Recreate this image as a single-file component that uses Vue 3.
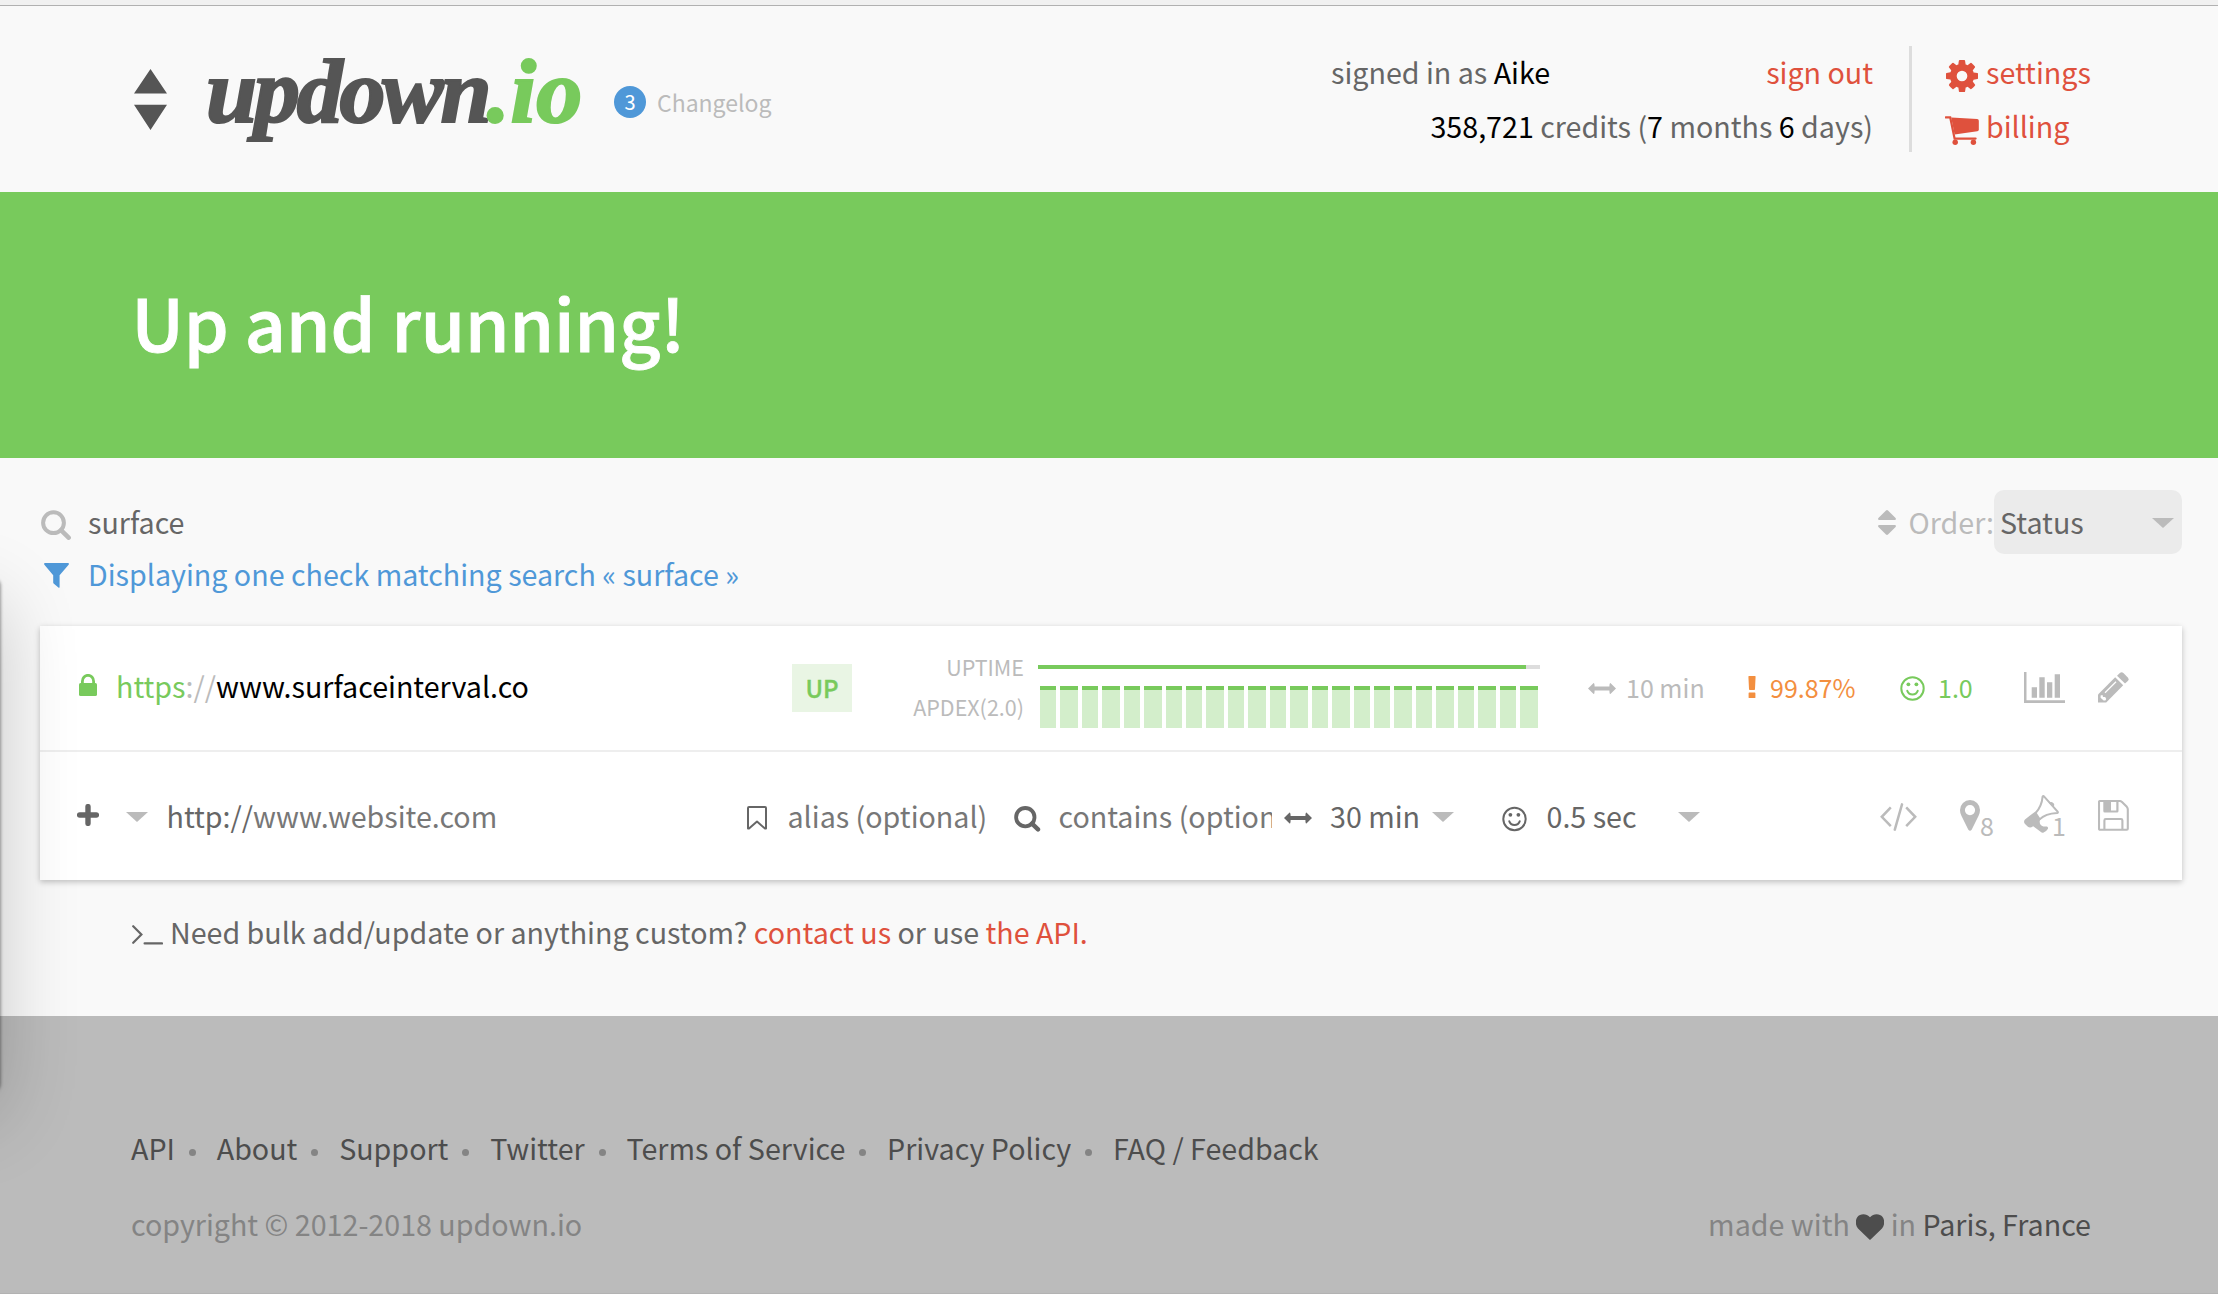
<script setup>
const footerLinks = ['API', 'About', 'Support', 'Twitter', 'Terms of Service', 'Privacy Policy', 'FAQ / Feedback']

// 24 hourly columns, snapped to even pixels with a 4px gutter
const edge = (i) => 2 * Math.round((i * 20.87) / 2)
const bars = Array.from({ length: 24 }, (_, i) => (i === 23 ? 18 : edge(i + 1) - edge(i) - 4))
</script>

<template>
  <div class="page">
    <div class="chrome"></div>

    <header class="header">
      <svg class="mark" width="33" height="61" viewBox="0 0 33 61"><path d="M16.5 0L33 24.5H0zM16.5 61L33 35.8H0z" fill="#555" /></svg>
      <div class="logo"><span class="logo-name">updown</span><span class="logo-tld">.io</span></div>
      <div class="bubble">3</div>
      <div class="changelog">Changelog</div>
      <div class="account">
        <div class="account-line"><span>signed in as <b>Aike</b></span><a>sign out</a></div>
        <div class="account-line end"><span><b>358,721</b> credits (<b>7</b> months <b>6</b> days)</span></div>
      </div>
      <div class="divider"></div>
      <nav class="links">
        <a>
          <svg width="32" height="32" viewBox="128 128 1536 1536"><path fill="currentColor" d="M1152 896q0-106-75-181t-181-75-181 75-75 181 75 181 181 75 181-75 75-181zm512-109v222q0 12-8 23t-20 13l-185 28q-19 54-39 91 35 50 107 138 10 12 10 25t-9 23q-27 37-99 108t-94 71q-12 0-26-9l-138-108q-44 23-91 38-16 136-29 186-7 28-36 28h-222q-14 0-24.5-8.5t-11.5-21.5l-28-184q-49-16-90-37l-141 107q-10 9-25 9-14 0-25-11-126-114-165-168-7-10-7-23 0-12 8-23 15-21 51-66.5t54-70.5q-27-50-41-99l-183-27q-13-2-21-12.5t-8-23.5v-222q0-12 8-23t19-13l186-28q14-46 39-92-40-57-107-138-10-12-10-24 0-10 9-23 26-36 98.5-107.5t94.5-71.5q13 0 26 10l138 107q44-23 91-38 16-136 29-186 7-28 36-28h222q14 0 24.5 8.5t11.5 21.5l28 184q49 16 90 37l142-107q9-9 24-9 13 0 25 10 129 119 165 170 7 8 7 22 0 12-8 23-15 21-51 66.5t-54 70.5q26 50 41 98l183 28q13 2 21 12.5t8 23.5z" /></svg>
          <span>settings</span>
        </a>
        <a class="billing">
          <svg width="34" height="29" viewBox="0 0 34 29">
            <path d="M.8 1.4H5.2L9.6 22.6H30.6" fill="none" stroke="currentColor" stroke-width="2.2" stroke-linecap="round" />
            <path d="M6.2 1.6L32.2 3Q33.8 3.2 33.8 4.8V13.6Q33.8 15 32.3 15.3L9.6 18.6z" fill="currentColor" />
            <circle cx="10.2" cy="26.2" r="2.7" fill="currentColor" /><circle cx="28.4" cy="26.2" r="2.7" fill="currentColor" />
          </svg>
          <span>billing</span>
        </a>
      </nav>
    </header>

    <section class="banner"><h1>Up and running!</h1></section>

    <main class="main">
      <div class="filters">
        <div class="filters-left">
          <div class="line">
            <span class="ico"><svg width="30" height="30" viewBox="0 0 30 30" fill="none" stroke="#bbb" stroke-width="4"><circle cx="12.5" cy="12.7" r="10.4" /><path d="M20 20.2L27.6 27.6" stroke-width="4.6" stroke-linecap="round" /></svg></span>
            <span>surface</span>
          </div>
          <div class="line blue">
            <span class="ico funnel"><svg width="25" height="25" viewBox="0 0 25 25"><path fill="currentColor" d="M.6 0H24.4Q25.4.9 24.4 2L15.6 12.2V24Q15.4 25.3 14.4 24.6L9.6 20.6Q9.2 20.2 9.2 19.5V12.2L.6 2Q-.4.9.6 0z" /></svg></span>
            <span>Displaying one check matching search « surface »</span>
          </div>
        </div>
        <div class="order">
          <svg class="sort" width="18" height="25" viewBox="0 0 18 25"><path fill="#bbb" d="M8 .4Q9 -.4 10 .4L17.6 8Q18.4 9.4 17.2 10H.8Q-.4 9.4.4 8zM8 24.6Q9 25.4 10 24.6L17.6 17Q18.4 15.6 17.2 15H.8Q-.4 15.6.4 17z" /></svg>
          <span class="order-label">Order:</span>
          <div class="select"><span>Status</span><i class="caret"></i></div>
        </div>
      </div>

      <div class="card">
        <div class="row check">
          <svg class="i-lock" width="18" height="22" viewBox="0 0 18 22"><path d="M3.4 10V7.2a5.6 5.9 0 0 1 11.2 0V10" fill="none" stroke="#78ca5c" stroke-width="2.8" /><rect y="9" width="18" height="13" rx="1.6" fill="#78ca5c" /></svg>
          <div class="txt"><span class="green">https</span><span class="muted">://</span><b>www.surfaceinterval.co</b></div>
          <div class="badge">UP</div>
          <div class="labels">UPTIME<br />APDEX(2.0)</div>
          <div class="graph">
            <div class="uptime"><div class="uptime-fill"></div></div>
            <div class="apdex"><i v-for="(w, i) in bars" :key="i" :style="{ width: w + 'px' }"></i></div>
          </div>
          <svg class="i-arrow muted" width="28" height="11" viewBox="0 0 28 11"><path fill="currentColor" d="M0 5.5L5.6 0Q6.6 0 6.6 3.6H21.4Q21.4 0 22.4 0L28 5.5L22.4 11Q21.4 11 21.4 7.4H6.6Q6.6 11 5.6 11z" /></svg>
          <div class="sm muted">10 min</div>
          <svg class="i-bang" width="8" height="22" viewBox="0 0 8 22"><path fill="#f38f3f" d="M1 0H7Q7.6 0 7.6.6L7 13Q6.9 14 6.3 14H1.7Q1.1 14 1 13L.4.6Q.4 0 1 0zM1.2 16.6H6.8Q7.4 16.6 7.4 17.2V21.4Q7.4 22 6.8 22H1.2Q.6 22 .6 21.4V17.2Q.6 16.6 1.2 16.6z" /></svg>
          <div class="sm orange">99.87%</div>
          <svg class="i-smile green" width="25" height="25" viewBox="0 0 25 25"><circle cx="12.5" cy="12.5" r="11.2" fill="none" stroke="currentColor" stroke-width="2" /><circle cx="8.4" cy="8.3" r="1.9" fill="currentColor" /><circle cx="16.4" cy="8.3" r="1.9" fill="currentColor" /><path d="M7.3 14.8C9 19.6 16 19.6 17.7 14.8" fill="none" stroke="currentColor" stroke-width="2" stroke-linecap="round" /></svg>
          <div class="sm green">1.0</div>
          <svg class="i-chart" width="41" height="32" viewBox="0 0 41 32" fill="#bbb"><path d="M0 0H2.5V28.3H41V31H0zM7.7 15.3H13V25.8H7.7zM15.3 5.3H20.7V25.8H15.3zM23 10.2H28.3V25.8H23zM30.7 2.3H36V25.8H30.7z" /></svg>
          <svg class="i-chart" width="31" height="31" viewBox="0 0 31 31"><path fill="#bbb" d="M0 22.4L17.2 5.3L25.2 13.3L8.2 30.6H0z" /><path fill="#bbb" d="M19 3.8L21.9 1Q23.6-.6 25.4 1L29.8 5.4Q31.4 7.2 29.8 9L27 11.6z" /><path d="M7 20.8L18 9.8" stroke="#fff" stroke-width="1.3" /><path d="M2.6 23.6L4.5 22.9L5 25H7.2L8.2 27L7.4 28.4H5.6L2.6 25.8z" fill="#fff" /></svg>
        </div>

        <div class="row form">
          <svg class="i-plus" width="22" height="22" viewBox="0 0 22 22"><path d="M11 2.6V19.4M2.6 11H19.4" stroke="#666" stroke-width="5.4" stroke-linecap="round" /></svg>
          <i class="caret"></i>
          <div class="txt"><span class="dark">http://</span><span class="hint">www.website.com</span></div>
          <svg class="i-mid" width="20" height="24" viewBox="0 0 20 24"><path d="M2 1H18Q19 1 19 2V22.6L18 22.6L10 15.6L2 22.6L1 22.6V2Q1 1 2 1z" fill="none" stroke="#666" stroke-width="2" stroke-linejoin="round" /></svg>
          <div class="txt hint">alias (optional)</div>
          <svg class="i-mid" width="27" height="26" viewBox="0 0 27 26" fill="none" stroke="#666" stroke-width="3.8"><circle cx="11.3" cy="11.2" r="9.2" /><path d="M18 17.6L24 23.4" stroke-width="4.4" stroke-linecap="round" /></svg>
          <div class="txt hint clip">contains (optional)</div>
          <svg class="i-arrow dark" width="28" height="12" viewBox="0 0 28 11"><path fill="currentColor" d="M0 5.5L5.6 0Q6.6 0 6.6 3.6H21.4Q21.4 0 22.4 0L28 5.5L22.4 11Q21.4 11 21.4 7.4H6.6Q6.6 11 5.6 11z" /></svg>
          <div class="txt dark">30 min</div>
          <i class="caret"></i>
          <svg class="i-mid dark" width="25" height="26" viewBox="0 0 25 25"><circle cx="12.5" cy="12.5" r="11.2" fill="none" stroke="currentColor" stroke-width="2" /><circle cx="8.4" cy="8.3" r="1.9" fill="currentColor" /><circle cx="16.4" cy="8.3" r="1.9" fill="currentColor" /><path d="M7.3 14.8C9 19.6 16 19.6 17.7 14.8" fill="none" stroke="currentColor" stroke-width="2" stroke-linecap="round" /></svg>
          <div class="txt dark">0.5 sec</div>
          <i class="caret"></i>
          <svg class="i-code" width="37" height="28" viewBox="0 0 37 28" fill="none" stroke="#bbb" stroke-width="2.5"><path d="M10.8 4.4L1.8 13.8L10.8 23.2M26.2 4.4L35.2 13.8L26.2 23.2" /><path d="M22 1.4L14.8 26.6" stroke-linecap="round" /></svg>
          <div class="count pin">
            <svg width="20" height="31" viewBox="0 0 20 31"><path fill="#bbb" fill-rule="evenodd" d="M10 0A10 10 0 0 1 20 10Q20 13 18.6 15.8L11.8 29.6Q10 32 8.2 29.6L1.4 15.8Q0 13 0 10A10 10 0 0 1 10 0zM10 5a5.1 5.1 0 1 0 0 10.2A5.1 5.1 0 1 0 10 5z" /></svg>
            <span>8</span>
          </div>
          <div class="count horn">
            <svg width="35" height="38" viewBox="0 0 35 38"><path d="M18.6 1.6Q19.3.6 20.2 1.6L33.6 16.6Q34.4 17.8 33 18Q21.4 18.6 15.6 24.4L11.6 18Q17.8 11.2 18.6 1.6z" fill="none" stroke="#bbb" stroke-width="2" /><path fill="#bbb" d="M25.2 8.4A2.6 2.6 0 1 1 29.6 11.6zM11.6 16.4Q12.6 21 17 24.2Q14 26 8.8 31.4Q6.2 33.6 3.6 31.6L.8 28.8Q-.8 26.6 1 24.6Q6 20.4 11.6 16.4zM8.2 30.6L16 24.4Q14.6 30 19.4 31.6L22.8 31.6Q24.6 32.2 23.8 34Q22.2 36.6 19.6 37.6Q18 38.2 16.6 36.8z" /></svg>
            <span>1</span>
          </div>
          <svg class="i-save" width="31" height="31" viewBox="0 0 31 31"><path d="M2 1H21.8Q23 1 24 2L28.8 6.8Q29.8 8 29.8 9.2V28.8Q29.8 29.8 28.8 29.8H2Q1 29.8 1 28.8V2Q1 1 2 1z" fill="none" stroke="#bbb" stroke-width="2.1" /><path d="M6.4 29.6V20.4Q6.4 19 7.8 19H23Q24.4 19 24.4 20.4V29.6" fill="none" stroke="#bbb" stroke-width="2.1" /><path fill="#bbb" fill-rule="evenodd" d="M5.3 1H20.5V11Q20.5 12.5 19 12.5H6.8Q5.3 12.5 5.3 11zM13 2V10.4H18.3V2z" /></svg>
        </div>
      </div>

      <p class="bulk">
        <svg width="31" height="20" viewBox="0 0 31 20" fill="none" stroke="#666" stroke-width="2.2"><path d="M1.2 1.2L9.4 9.4L1.2 17.8M12.6 18.4H30" stroke-linecap="round" /></svg>
        <span>Need bulk add/update or anything custom? <a>contact us</a> or use <a>the API.</a></span>
      </p>
    </main>

    <footer class="footer">
      <div class="foot-links">
        <template v-for="(l, i) in footerLinks" :key="l"><i v-if="i" class="dot"></i><a>{{ l }}</a></template>
      </div>
      <div class="foot-bottom">
        <span>copyright © 2012-2018 updown.io</span>
        <span class="made">made with <svg width="28" height="26" viewBox="0 0 28 26"><path fill="#4d4d4d" d="M14 26L12.6 24.8L2 14.4C-1 11-.6 5.6 1.4 3C4-.6 10.4-1 14 3.2C17.6-1 24-.6 26.6 3C28.6 5.6 29 11 26 14.4L15.4 24.8z" /></svg> in <a>Paris, France</a></span>
      </div>
    </footer>

    <div class="window-shadow"></div>
  </div>
</template>

<style>
body { background: #f9f9f9; }
</style>

<style scoped>
.page {
  position: relative;
  width: 2218px;
  height: 1294px;
  overflow: hidden;
  box-sizing: border-box;
  background: #f9f9f9;
  color: #666;
  font-family: "Noto Sans CJK SC", "Noto Sans", sans-serif;
  font-size: 28.65px;
  line-height: 40px;
  white-space: nowrap;
}
.page svg { display: block; flex: none; }
b { font-weight: 400; color: #000; }
a { color: #df513d; }
.green { color: #78ca5c; }
.muted { color: #bbb; }
.orange { color: #f38f3f; }
.dark { color: #666; }
.hint { color: #777; }
.chrome { height: 5px; background: #f1f1f1; border-bottom: 1px solid #b1b1b1; }

.header { display: flex; height: 186px; padding-left: 134px; align-items: flex-start; }
.mark { margin-top: 62.5px; }
.logo {
  display: flex;
  width: 408px;
  margin: 30px 0 0 39px;
  font: italic 700 92px/110px "Liberation Serif", serif;
  color: #555;
}
.logo-name { width: 281px; letter-spacing: -3.2px; -webkit-text-stroke: 2.2px #555; }
.logo-tld { color: #78ca5c; letter-spacing: 0.4px; -webkit-text-stroke: 2.2px #78ca5c; }
.bubble {
  width: 32px;
  height: 32px;
  margin-top: 80px;
  border-radius: 50%;
  background: #4f98d8;
  color: #fff;
  font-size: 20px;
  line-height: 31px;
  text-align: center;
}
.changelog { width: 674px; margin: 76px 0 0 11px; font-size: 23px; color: #bbb; }
.account { width: 542px; margin-top: 39px; line-height: 54px; }
.account-line { display: flex; justify-content: space-between; }
.account-line.end { justify-content: flex-end; }
.divider { width: 3px; height: 106px; margin: 40px 0 0 36px; background: #ddd; }
.links { margin: 39px 0 0 34px; line-height: 54px; }
.links a { display: flex; align-items: center; }
.links svg { margin-top: 7px; }
.links span { width: 104px; margin-left: 8px; }
.links .billing svg { margin: 8px -1px 0 -1px; }

.banner { height: 266px; background: #78ca5c; }
h1 {
  margin: 0;
  padding: 79px 0 0 131.5px;
  color: #fff;
  font-size: 71.4px;
  font-weight: 500;
  line-height: 100px;
  -webkit-text-stroke: 0.9px #fff;
}

.main { height: 558px; padding: 0 36px 0 40px; }
.filters { display: flex; justify-content: space-between; height: 168px; }
.filters-left { padding-top: 44px; }
.line { display: flex; height: 52px; }
.ico { box-sizing: border-box; width: 48px; padding: 7.5px 0 0 1px; }
.blue { color: #4f98d8; }
.ico.funnel { padding: 9px 0 0 4px; }
.order { display: flex; padding-top: 32px; }
.sort { margin-top: 20px; }
.order-label { width: 85.5px; margin: 12px 0 0 12.5px; color: #bbb; }
.select {
  display: flex;
  justify-content: space-between;
  box-sizing: border-box;
  width: 188px;
  height: 64px;
  padding: 12px 8px 0 6px;
  border-radius: 10px;
  background: #ebebeb;
}
.caret {
  width: 0;
  height: 0;
  border: solid transparent;
  border-width: 10px 11px 0;
  border-top-color: #bbb;
}
.select .caret { margin-top: 16px; }

.card { height: 254px; background: #fff; box-shadow: 0 2px 6px rgba(0, 0, 0, 0.24); }
.row { display: grid; align-items: start; }
.check {
  height: 124px;
  padding-left: 39px;
  border-bottom: 2px solid #eee;
  grid-template-columns: 37px 676px 60px 171px 565px 38px 122px 22px 130px 38px 86px 74px 31px;
}
.check .txt { margin-top: 40px; }
.i-lock { margin-top: 48px; }
.sm { margin-top: 41px; font-size: 25px; }
.badge {
  height: 48px;
  margin-top: 38px;
  background: #e9f5e4;
  color: #78ca5c;
  font-size: 24px;
  font-weight: 500;
  line-height: 48px;
  text-align: center;
  -webkit-text-stroke: 0.4px #78ca5c;
}
.labels { width: 172px; margin-top: 21px; text-align: right; font-size: 21.5px; color: #bbb; }
.graph { width: 502px; margin: 39px 0 0 15px; }
.uptime { height: 4px; background: #ddd; }
.uptime-fill { width: 488px; height: 4px; background: #78ca5c; }
.apdex { display: flex; gap: 4px; margin: 17px 0 0 2px; }
.apdex i { height: 38px; border-top: 4px solid #78ca5c; background: #d3eecb; }
.i-bang { margin-top: 50px; }
.i-smile { margin-top: 49.5px; }
.i-chart { margin-top: 45.5px; }
.check .i-arrow { margin-top: 57px; }

.form {
  height: 128px;
  padding-left: 37px;
  grid-template-columns: 49px 40.5px 580.5px 40.5px 226.5px 44.5px 225.5px 46px 102px 70px 44.5px 131.5px 202px 80px 64px 74px 31px;
}
.form .txt { margin-top: 44px; }
.form .i-arrow { margin-top: 60px; }
.form .caret { margin-top: 60px; }
.i-plus { margin-top: 52px; }
.i-mid { margin-top: 54px; }
.clip { width: 213.5px; overflow: hidden; }
.i-code { margin-top: 50.5px; }
.i-save { margin-top: 48px; }
.count { display: flex; color: #bbb; font-size: 25px; }
.count span { margin-top: 53px; }
.pin svg { margin-top: 48px; }
.horn svg { margin: 43px -7px 0 0; }

.bulk { display: flex; margin: 0; padding: 32px 0 0 92px; }
.bulk svg { margin: 13px 7px 0 0; }

.footer {
  height: 278px;
  box-sizing: border-box;
  padding: 112px 127px 0 131px;
  border-bottom: 1px solid #b2b2b2;
  background: #bbb;
  color: #848484;
}
.footer a { color: #4d4d4d; }
.foot-links { display: flex; align-items: center; height: 40px; }
.dot { width: 7px; height: 7px; margin: 8px 20.9px 0 13.9px; border-radius: 50%; background: #848484; }
.foot-bottom { display: flex; justify-content: space-between; margin-top: 36px; }
.made { display: flex; white-space: pre; }
.made svg { margin-top: 10px; }

/* drop shadow cast by a neighbouring window past the left edge */
.window-shadow {
  position: absolute;
  left: -700px;
  top: 578px;
  width: 700px;
  height: 514px;
  border-radius: 8px;
  box-shadow: 0 0 3px 1px rgba(0, 0, 0, 0.35), 0 24px 80px rgba(0, 0, 0, 0.2);
  pointer-events: none;
}
</style>
